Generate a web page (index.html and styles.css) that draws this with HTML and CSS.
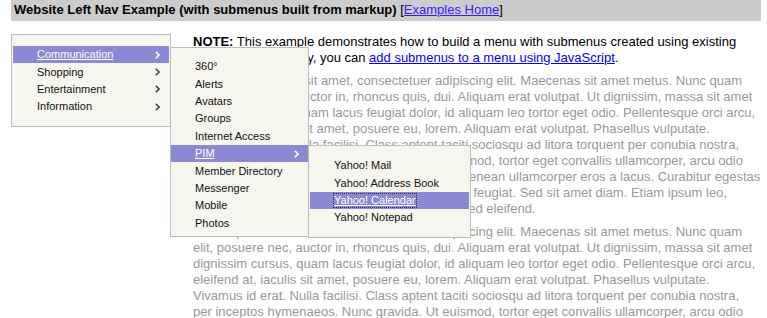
FILE: index.html
```html
<!DOCTYPE html>
<html>
<head>
<meta charset="utf-8">
<title>Website Left Nav Example</title>
<link rel="stylesheet" href="styles.css">
</head>
<body>
<div class="page">
  <div class="header"><b>Website Left Nav Example (with submenus built from markup)</b> [<a href="#">Examples Home</a>]</div>
  <div class="main">
    <nav class="menu nav">
      <ul class="items">
        <li class="item sel">
          <a href="#">Communication</a>
          <svg class="chev" width="5" height="8" viewBox="0 0 5 8"><polyline points="0.8,0.8 4,4 0.8,7.2"/></svg>
          <div class="menu sub1">
            <ul class="items">
              <li class="item"><a href="#">360°</a></li>
              <li class="item"><a href="#">Alerts</a></li>
              <li class="item"><a href="#">Avatars</a></li>
              <li class="item"><a href="#">Groups</a></li>
              <li class="item"><a href="#">Internet Access</a></li>
              <li class="item sel">
                <a href="#">PIM</a>
                <svg class="chev" width="5" height="8" viewBox="0 0 5 8"><polyline points="0.8,0.8 4,4 0.8,7.2"/></svg>
                <div class="menu sub2">
                  <ul class="items">
                    <li class="item"><a href="#">Yahoo! Mail</a></li>
                    <li class="item"><a href="#">Yahoo! Address Book</a></li>
                    <li class="item sel"><a href="#" class="focus">Yahoo! Calendar</a></li>
                    <li class="item"><a href="#">Yahoo! Notepad</a></li>
                  </ul>
                </div>
              </li>
              <li class="item"><a href="#">Member Directory</a></li>
              <li class="item"><a href="#">Messenger</a></li>
              <li class="item"><a href="#">Mobile</a></li>
              <li class="item"><a href="#">Photos</a></li>
            </ul>
          </div>
        </li>
        <li class="item"><a href="#">Shopping</a><svg class="chev" width="5" height="8" viewBox="0 0 5 8"><polyline points="0.8,0.8 4,4 0.8,7.2"/></svg></li>
        <li class="item"><a href="#">Entertainment</a><svg class="chev" width="5" height="8" viewBox="0 0 5 8"><polyline points="0.8,0.8 4,4 0.8,7.2"/></svg></li>
        <li class="item"><a href="#">Information</a><svg class="chev" width="5" height="8" viewBox="0 0 5 8"><polyline points="0.8,0.8 4,4 0.8,7.2"/></svg></li>
      </ul>
    </nav>
    <div class="content">
      <p class="note"><strong>NOTE:</strong> This example demonstrates how to build a menu with submenus created using existing markup. Alternatively, you can <a href="#">add submenus to a menu using JavaScript</a>.</p>
      <p class="lorem">Lorem ipsum dolor sit amet, consectetuer adipiscing elit. Maecenas sit amet metus. Nunc quam<br>elit, posuere nec, auctor in, rhoncus quis, dui. Aliquam erat volutpat. Ut dignissim, massa sit amet<br>dignissim cursus, quam lacus feugiat dolor, id aliquam leo tortor eget odio. Pellentesque orci arcu,<br>eleifend at, iaculis sit amet, posuere eu, lorem. Aliquam erat volutpat. Phasellus vulputate.<br>Vivamus id erat. Nulla facilisi. Class aptent taciti sociosqu ad litora torquent per conubia nostra,<br>per inceptos hymenaeos. Nunc gravida. Ut euismod, tortor eget convallis ullamcorper, arcu odio<br>egestas pede, ut ornare urna elit vitae mauris. Aenean ullamcorper eros a lacus. Curabitur egestas<br>tempus lectus. Donec et lectus et purus dapibus feugiat. Sed sit amet diam. Etiam ipsum leo,<br>facilisis ac, vestibulum at, commodo vel, nibh. Sed eleifend.</p>
      <p class="lorem">Lorem ipsum dolor sit amet, consectetuer adipiscing elit. Maecenas sit amet metus. Nunc quam<br>elit, posuere nec, auctor in, rhoncus quis, dui. Aliquam erat volutpat. Ut dignissim, massa sit amet<br>dignissim cursus, quam lacus feugiat dolor, id aliquam leo tortor eget odio. Pellentesque orci arcu,<br>eleifend at, iaculis sit amet, posuere eu, lorem. Aliquam erat volutpat. Phasellus vulputate.<br>Vivamus id erat. Nulla facilisi. Class aptent taciti sociosqu ad litora torquent per conubia nostra,<br>per inceptos hymenaeos. Nunc gravida. Ut euismod, tortor eget convallis ullamcorper, arcu odio<br>egestas pede, ut ornare urna elit vitae mauris. Aenean ullamcorper eros a lacus. Curabitur egestas<br>tempus lectus. Donec et lectus et purus dapibus feugiat. Sed sit amet diam. Etiam ipsum leo,<br>facilisis ac, vestibulum at, commodo vel, nibh. Sed eleifend.</p>
    </div>
  </div>
</div>
</body>
</html>
```
FILE: styles.css
```css
html, body {
  margin: 0;
  padding: 0;
  background: #fff;
}
body {
  font-family: "Liberation Sans", Arial, sans-serif;
  font-size: 13px;
  line-height: 16px;
  color: #000;
  overflow: hidden;
}
.page {
  padding: 0 6px 0 11px;
}
.header {
  background: #cccccc;
  padding: 2px 3px 3px;
  color: #000;
}
.header a {
  color: #3a1cff;
}
.main {
  display: flex;
  align-items: flex-start;
  margin-top: 13px;
}
.menu {
  box-sizing: border-box;
  background: #f6f6ee;
  border: 1px solid #bdbdbd;
  font-size: 11px;
  line-height: 13px;
}
.items {
  list-style: none;
  margin: 0;
  padding: 0;
}
.nav {
  flex: none;
  width: 160px;
  padding: 11px 1px 10.5px;
  position: relative;
  z-index: 2;
}
.item {
  position: relative;
  height: 17.4px;
  display: flex;
  align-items: center;
  justify-content: space-between;
  padding: 0 9px 0 24px;
}
.item > a {
  color: #111;
  text-decoration: none;
}
.chev {
  display: block;
  flex: none;
}
.chev polyline {
  fill: none;
  stroke: #444;
  stroke-width: 1.6;
}
.item.sel {
  background: #8c89d4;
}
.item.sel > a {
  color: #fff;
  text-decoration: underline;
}
.item.sel > .chev polyline {
  stroke: #fff;
}
.sub1 {
  position: absolute;
  left: calc(100% + 1px);
  top: 1px;
  width: 139px;
  padding: 10px 0 4px;
}
.sub2 {
  position: absolute;
  left: 100%;
  top: 0;
  width: 163px;
  padding: 11px 1px 10px;
}
.focus {
  outline: 1px dotted #333;
}
.content {
  flex: 1;
  margin-left: 22px;
  margin-right: 3px;
  min-width: 0;
}
.content p {
  margin: 0 0 7px;
}
.note a {
  color: #0000ff;
}
.lorem {
  color: #999;
  white-space: nowrap;
}
```
